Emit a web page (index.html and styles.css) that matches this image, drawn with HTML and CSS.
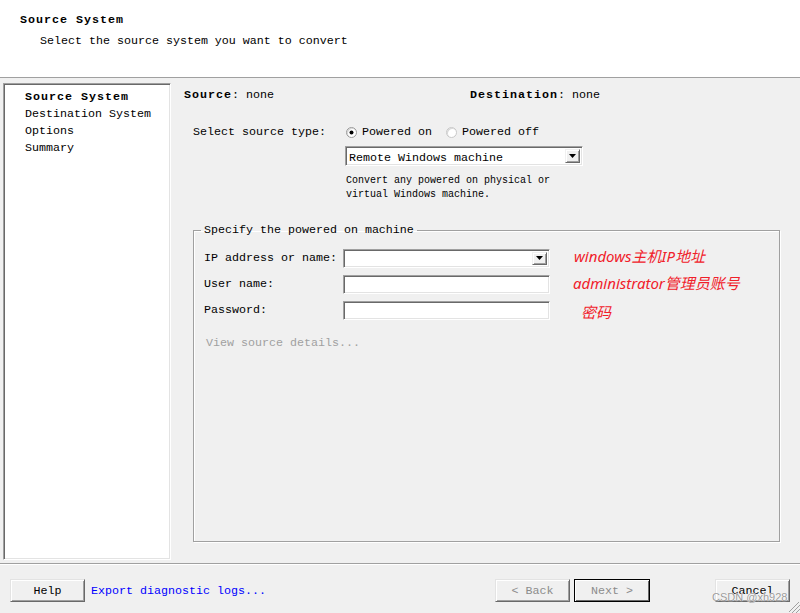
FILE: index.html
```html
<!DOCTYPE html>
<html>
<head>
<meta charset="utf-8">
<link rel="stylesheet" href="styles.css">
</head>
<body>
<div class="window">
  <div class="header">
    <div class="title">Source System</div>
    <div class="subtitle">Select the source system you want to convert</div>
  </div>
  <div class="main">
    <div class="steps">
      <div class="step current">Source System</div>
      <div class="step">Destination System</div>
      <div class="step">Options</div>
      <div class="step">Summary</div>
    </div>
    <div class="content">
      <div class="summary">
        <div><b class="bold">Source</b>: none</div>
        <div><b class="bold">Destination</b>: none</div>
      </div>
      <div class="type-grid">
        <div class="type-label">Select source type:</div>
        <div class="type-body">
          <div class="radios">
            <span class="radio on"></span><span class="radio-text">Powered on</span>
            <span class="radio off"></span><span class="radio-text">Powered off</span>
          </div>
          <div class="combo wide">
            <span class="combo-value">Remote Windows machine</span>
            <span class="combo-btn"><svg width="7" height="4" viewBox="0 0 7 4"><polygon points="0,0 7,0 3.5,4" fill="#000"/></svg></span>
          </div>
          <div class="desc">Convert any powered on physical or<br>virtual Windows machine.</div>
        </div>
      </div>
      <fieldset class="group">
        <legend>Specify the powered on machine</legend>
        <div class="row">
          <span class="label">IP address or name:</span>
          <div class="combo narrow">
            <span class="combo-value"></span>
            <span class="combo-btn"><svg width="7" height="4" viewBox="0 0 7 4"><polygon points="0,0 7,0 3.5,4" fill="#000"/></svg></span>
          </div>
          <span class="note note-ip">windows主机IP地址</span>
        </div>
        <div class="row">
          <span class="label">User name:</span>
          <div class="field"></div>
          <span class="note note-user">administrator管理员账号</span>
        </div>
        <div class="row">
          <span class="label">Password:</span>
          <div class="field"></div>
          <span class="note note-pw">密码</span>
        </div>
        <div class="details">View source details...</div>
      </fieldset>
    </div>
  </div>
  <div class="footer">
    <div class="btn">Help</div>
    <a class="link">Export diagnostic logs...</a>
    <div class="btn disabled back">&lt; Back</div>
    <div class="btn disabled default">Next &gt;</div>
    <div class="btn cancel">Cancel</div>
  </div>
  <div class="watermark">CSDN @xh928</div>
  <svg class="grip" width="12" height="12" viewBox="0 0 12 12">
    <line x1="11" y1="1" x2="1" y2="11" stroke="#a0a0a0"/>
    <line x1="12" y1="4" x2="4" y2="12" stroke="#a0a0a0"/>
    <line x1="12" y1="8" x2="8" y2="12" stroke="#a0a0a0"/>
  </svg>
</div>
</body>
</html>
```
FILE: styles.css
```css
* { box-sizing: border-box; }
html, body { margin: 0; padding: 0; }
body {
  background: #f0f0f0;
  font-family: "Liberation Mono", "Noto Sans CJK SC", monospace;
  font-size: 11.67px;
  color: #000;
}
.window {
  position: relative;
  width: 800px;
  height: 613px;
  overflow: hidden;
  background: #f0f0f0;
}
.header {
  height: 78px;
  background: #fff;
  border-bottom: 1px solid #a0a0a0;
  padding: 12px 0 0 20px;
  line-height: 16px;
}
.title, .step.current, .bold {
  font-weight: bold;
  letter-spacing: 1px;
}
.subtitle { margin-top: 5px; padding-left: 20px; }

.main {
  display: flex;
  height: 485px;
  padding-top: 5px;
}
.steps {
  margin-left: 3px;
  width: 168px;
  height: 477px;
  background: #fff;
  border: 1px solid;
  border-color: #a0a0a0 #fff #fff #a0a0a0;
  box-shadow: inset 1px 1px 0 #696969, inset -1px -1px 0 #e3e3e3;
  padding: 5px 0 0 21px;
}
.step { line-height: 17px; }

.content { flex: 1; padding-left: 13px; }
.summary {
  display: grid;
  grid-template-columns: 286px auto;
  line-height: 16px;
  margin-top: 4px;
}
.type-grid {
  display: grid;
  grid-template-columns: 152px 1fr;
  margin-top: 21px;
  margin-left: 9px;
}
.type-label { line-height: 16px; }
.radios { display: flex; align-items: center; height: 16px; }
.radio {
  width: 11px;
  height: 11px;
  border-radius: 50%;
  background: #fff;
  border: 1px solid #9a9a9a;
  box-shadow: inset 1px 1px 0 #d8d8d8;
  position: relative;
  flex: none;
}
.radio.on { margin-left: 1px; }
.radio.on::after {
  content: "";
  position: absolute;
  left: 3px; top: 3px;
  width: 3px; height: 3px;
  border-radius: 50%;
  background: #000;
  box-shadow: 0 0 0 0.5px #000;
}
.radio.off { margin-left: 14px; border-color: #c8c8c8; }
.radio-text { margin-left: 5px; }

.combo {
  display: flex;
  height: 20px;
  background: #fff;
  border: 1px solid;
  border-color: #a0a0a0 #fff #fff #a0a0a0;
  box-shadow: inset 1px 1px 0 #696969, inset -1px -1px 0 #e3e3e3;
  padding: 2px 2px 2px 3px;
  align-items: stretch;
}
.combo.wide { width: 238px; margin-top: 6px; }
.combo.narrow { width: 207px; height: 19px; }
.combo-value { flex: 1; line-height: 15px; padding-top: 2px; }
.combo-btn {
  width: 15px;
  background: #f0f0f0;
  border: 1px solid;
  border-color: #f0f0f0 #696969 #696969 #f0f0f0;
  box-shadow: inset 1px 1px 0 #fff, inset -1px -1px 0 #a0a0a0;
  display: flex;
  align-items: center;
  justify-content: center;
}
.desc {
  margin-top: 8px;
  font-size: 10px;
  line-height: 14px;
  padding-left: 1px;
}

.group {
  margin: 20px 0 0 9px;
  width: 587px;
  height: 320px;
  padding: 0 7px;
  border: 1px solid #a0a0a0;
  box-shadow: inset 1px 1px 0 #fff, 1px 1px 0 #fff;
}
.group legend {
  padding: 0 3px;
  line-height: 16px;
}
.row {
  display: flex;
  align-items: center;
  height: 20px;
  padding-left: 3px;
  margin-top: 6px;
}
.row:first-of-type { margin-top: 10px; }
.label { width: 139px; flex: none; }
.field {
  width: 207px;
  height: 19px;
  background: #fff;
  border: 1px solid;
  border-color: #a0a0a0 #fff #fff #a0a0a0;
  box-shadow: inset 1px 1px 0 #696969, inset -1px -1px 0 #e3e3e3;
}
.note {
  margin-left: 24px;
  font-family: "Noto Sans", "Noto Sans CJK SC", sans-serif;
  font-style: italic;
  font-size: 15px;
  color: #f0202a;
  white-space: nowrap;
}
.note-ip { margin-bottom: 6px; }
.note-user { margin-left: 23px; margin-bottom: 4px; }
.note-pw { margin-left: 31px; margin-top: 2px; }
.details {
  margin-top: 15px;
  padding-left: 5px;
  line-height: 16px;
  color: #a0a0a0;
}

.footer {
  border-top: 1px solid #a0a0a0;
  box-shadow: inset 0 1px 0 #fff;
  display: flex;
  align-items: center;
  padding: 15px 10px 0 10px;
}
.btn {
  width: 75px;
  height: 23px;
  line-height: 21px;
  padding-top: 1px;
  text-align: center;
  background: #f0f0f0;
  border: 1px solid;
  border-color: #e3e3e3 #696969 #696969 #e3e3e3;
  box-shadow: inset 1px 1px 0 #fff, inset -1px -1px 0 #a0a0a0;
  flex: none;
}
.btn.disabled { color: #8c8c8c; }
.link { margin-left: 6px; color: #0000ff; line-height: 21px; padding-top: 1px; }
.back { margin-left: auto; }
.default {
  margin-left: 4px;
  width: 76px;
  border-color: #000;
  box-shadow: inset 1px 1px 0 #fff, inset -1px -1px 0 #696969;
}
.cancel { margin-left: 65px; }

.watermark {
  position: absolute;
  left: 712px;
  top: 590px;
  font-family: "Liberation Sans", sans-serif;
  font-size: 11px;
  line-height: 14px;
  color: #9a9a9a;
  text-shadow: 0 0 1px #fff, 0 0 1px #fff;
}
.grip { position: absolute; right: 0; bottom: 0; }
```
